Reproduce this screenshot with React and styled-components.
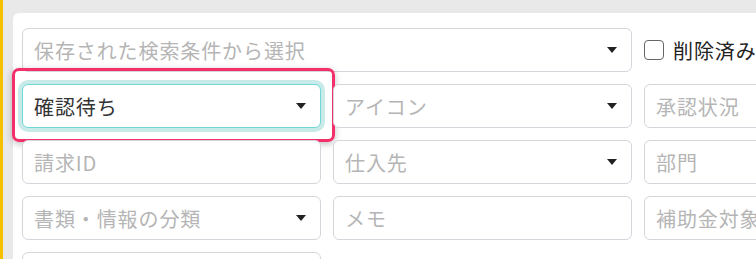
import React from "react";
import styled, { createGlobalStyle } from "styled-components";

const GlobalStyle = createGlobalStyle`
  html, body {
    margin: 0;
    padding: 0;
    background: #e9e9e9;
    overflow: hidden;
  }
  body {
    font-family: "Noto Sans CJK JP", "Noto Sans", sans-serif;
  }
`;

const Page = styled.div`
  width: 756px;
  height: 259px;
  box-sizing: border-box;
  border-left: 3px solid #f6c100;
  padding: 13px 0 0 10px;
  overflow: hidden;
`;

const Card = styled.div`
  background: #ffffff;
  border-radius: 6px 0 0 0;
  padding: 15px 0 0 9px;
  height: 300px;
  width: 1100px;
`;

const Grid = styled.div`
  display: grid;
  grid-template-columns: repeat(3, 299px);
  grid-auto-rows: 44px;
  column-gap: 12px;
  row-gap: 12px;
`;

const Cell = styled.div`
  position: relative;
  grid-column: span ${(p) => p.span || 1};
`;

const Field = styled.div`
  height: 100%;
  box-sizing: border-box;
  display: flex;
  align-items: center;
  padding: 0 14px 0 11px;
  border: 1px solid ${(p) => (p.focused ? "#6fd8d6" : "#d3d6db")};
  border-radius: 6px;
  background: #fff;
  box-shadow: ${(p) => (p.focused ? "0 0 0 4px #c8ebe9" : "none")};
  font-size: 20px;
  color: ${(p) => (p.filled ? "#333333" : "#b5b5b5")};
  white-space: nowrap;
`;

const Label = styled.span`
  flex: 1;
  overflow: hidden;
  letter-spacing: 0.9px;
`;

const Caret = styled.span`
  width: 0;
  height: 0;
  border-left: 5.5px solid transparent;
  border-right: 5.5px solid transparent;
  border-top: 6px solid #222;
`;

const Highlight = styled.div`
  position: absolute;
  top: -16px;
  left: -10px;
  right: -14px;
  bottom: -14px;
  border: 3px solid #f3306a;
  border-radius: 7px;
  box-shadow: 0 2px 7px rgba(0, 0, 0, 0.25);
  pointer-events: none;
`;

const CheckRow = styled.label`
  display: flex;
  align-items: center;
  gap: 9px;
  height: 100%;
  font-size: 20px;
  letter-spacing: 0.9px;
  color: #222;
  white-space: nowrap;
`;

const Box = styled.span`
  width: 20px;
  height: 20px;
  box-sizing: border-box;
  border: 1.5px solid #666;
  border-radius: 4px;
  background: #fff;
`;

function Select({ label, filled, focused }) {
  return (
    <Field filled={filled} focused={focused}>
      <Label>{label}</Label>
      <Caret />
    </Field>
  );
}

function Input({ label }) {
  return (
    <Field>
      <Label>{label}</Label>
    </Field>
  );
}

export default function App() {
  return (
    <Page>
      <GlobalStyle />
      <Card>
        <Grid>
          <Cell span={2}>
            <Select label="保存された検索条件から選択" />
          </Cell>
          <Cell>
            <CheckRow>
              <Box />
              削除済み
            </CheckRow>
          </Cell>

          <Cell>
            <Select label="確認待ち" filled focused />
            <Highlight />
          </Cell>
          <Cell>
            <Select label="アイコン" />
          </Cell>
          <Cell>
            <Input label="承認状況" />
          </Cell>

          <Cell>
            <Input label="請求ID" />
          </Cell>
          <Cell>
            <Select label="仕入先" />
          </Cell>
          <Cell>
            <Input label="部門" />
          </Cell>

          <Cell>
            <Select label="書類・情報の分類" />
          </Cell>
          <Cell>
            <Input label="メモ" />
          </Cell>
          <Cell>
            <Input label="補助金対象" />
          </Cell>

          <Cell>
            <Input label="" />
          </Cell>
        </Grid>
      </Card>
    </Page>
  );
}
